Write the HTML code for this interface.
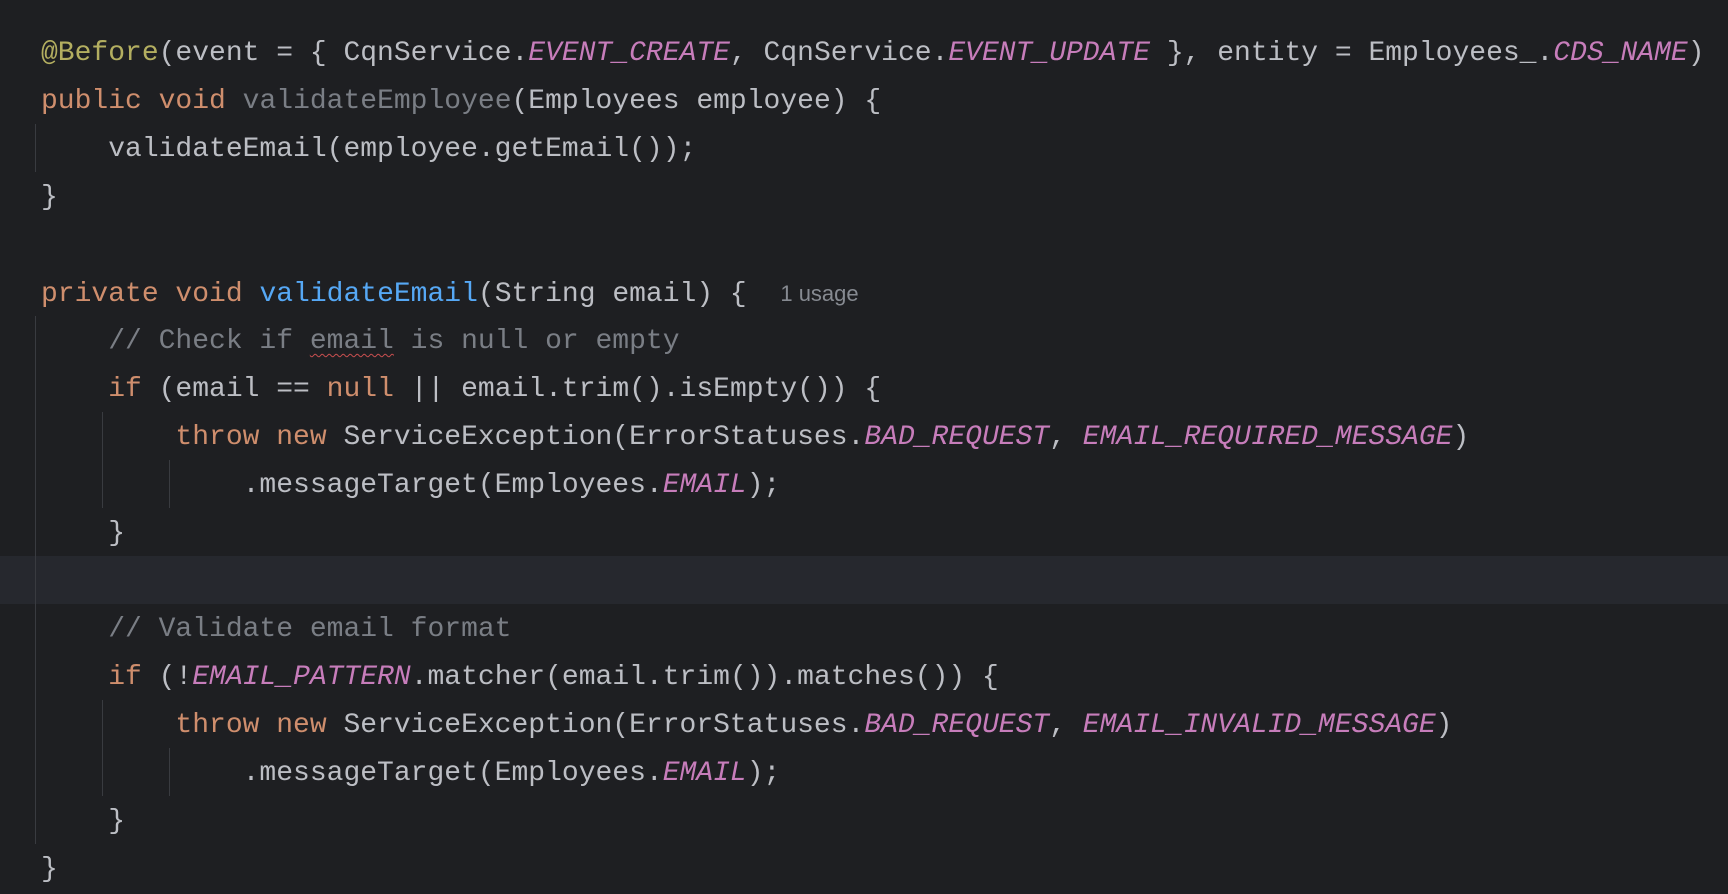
<!DOCTYPE html>
<html><head><meta charset="utf-8"><style>
body{margin:0;width:1728px;height:880px;background:#1e1f22;overflow:hidden;font-family:"Liberation Mono",monospace;font-size:28px;color:#bcbec4}
.l{position:absolute;left:41px;height:48px;line-height:48px;white-space:pre;margin-top:2px}
.k{color:#cf8e6d}.a{color:#b3ae60}.c{color:#c77dbb;font-style:italic}.m{color:#56a8f5}.g{color:#7a7e85}.cm{color:#7a7e85}
.h{font-family:"Liberation Sans",sans-serif;font-size:22px;color:#868a91}
.sq{text-decoration:underline wavy #c94f4f;text-decoration-thickness:1px;text-underline-offset:5px}
.cur{position:absolute;left:0;width:1728px;top:556px;height:48px;background:#26282e}
.gd{position:absolute;width:1px;background:#393b40}
</style></head><body>
<div class="cur"></div>
<div class="gd" style="left:35px;top:124px;height:48px"></div>
<div class="gd" style="left:35px;top:316px;height:528px"></div>
<div class="gd" style="left:102px;top:412px;height:96px"></div>
<div class="gd" style="left:169px;top:460px;height:48px"></div>
<div class="gd" style="left:102px;top:700px;height:96px"></div>
<div class="gd" style="left:169px;top:748px;height:48px"></div>
<div class="l" style="top:28px"><span class="a">@Before</span>(event = { CqnService.<span class="c">EVENT_CREATE</span>, CqnService.<span class="c">EVENT_UPDATE</span> }, entity = Employees_.<span class="c">CDS_NAME</span>)</div>
<div class="l" style="top:76px"><span class="k">public void</span> <span class="g">validateEmployee</span>(Employees employee) {</div>
<div class="l" style="top:124px">    validateEmail(employee.getEmail());</div>
<div class="l" style="top:172px">}</div>
<div class="l" style="top:268px"><span class="k">private void</span> <span class="m">validateEmail</span>(String email) {  <span class="h">1 usage</span></div>
<div class="l" style="top:316px"><span class="cm">    // Check if <span class="sq">email</span> is null or empty</span></div>
<div class="l" style="top:364px">    <span class="k">if</span> (email == <span class="k">null</span> || email.trim().isEmpty()) {</div>
<div class="l" style="top:412px">        <span class="k">throw new</span> ServiceException(ErrorStatuses.<span class="c">BAD_REQUEST</span>, <span class="c">EMAIL_REQUIRED_MESSAGE</span>)</div>
<div class="l" style="top:460px">            .messageTarget(Employees.<span class="c">EMAIL</span>);</div>
<div class="l" style="top:508px">    }</div>
<div class="l" style="top:604px"><span class="cm">    // Validate email format</span></div>
<div class="l" style="top:652px">    <span class="k">if</span> (!<span class="c">EMAIL_PATTERN</span>.matcher(email.trim()).matches()) {</div>
<div class="l" style="top:700px">        <span class="k">throw new</span> ServiceException(ErrorStatuses.<span class="c">BAD_REQUEST</span>, <span class="c">EMAIL_INVALID_MESSAGE</span>)</div>
<div class="l" style="top:748px">            .messageTarget(Employees.<span class="c">EMAIL</span>);</div>
<div class="l" style="top:796px">    }</div>
<div class="l" style="top:844px">}</div>
</body></html>
